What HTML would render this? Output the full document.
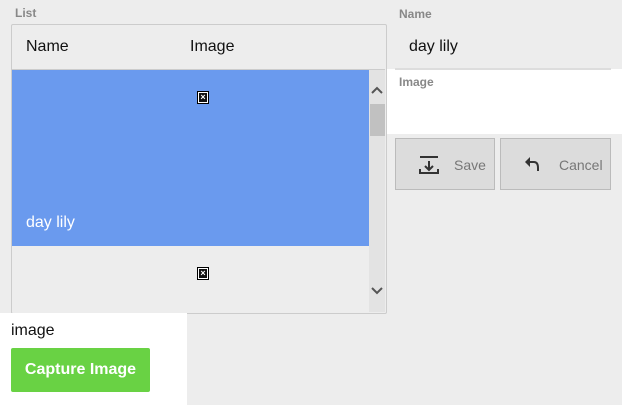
<!DOCTYPE html>
<html><head><style>
body{margin:0;width:622px;height:405px;background:#ededed;font-family:"Liberation Sans",Arial,sans-serif;position:relative;overflow:hidden}
.a{position:absolute}
.lbl{font-size:12px;font-weight:bold;color:#888}
.x{position:absolute;width:10px;height:11px;border:1px solid #000;background:#fff}
.x:after{content:"";position:absolute;left:1px;top:1px;width:8px;height:9px;background:#111}
.x span{position:absolute;left:1px;top:-1px;color:#fff;font-size:9px;font-weight:bold;z-index:1;line-height:12px;width:8px;text-align:center}
.btn{position:absolute;background:#dcdcdc;border:1px solid #bbb;box-sizing:border-box;color:#777;font-size:14px}
</style></head><body>
<div class="a lbl" style="left:15px;top:6px">List</div>
<div class="a" style="left:11px;top:24px;width:374px;height:288px;border:1px solid #ccc;border-radius:2px;background:#ededed"></div>
<div class="a" style="left:26px;top:38px;font-size:16px;color:#111">Name</div>
<div class="a" style="left:190px;top:38px;font-size:16px;color:#111">Image</div>
<div class="a" style="left:12px;top:69px;width:373px;height:1px;background:#ccc"></div>
<div class="a" style="left:12px;top:70px;width:357px;height:176px;background:#6a9aee"></div>
<div class="x" style="left:197px;top:91px"><span>×</span></div>
<div class="a" style="left:26px;top:214px;font-size:16px;color:#fff">day lily</div>
<div class="x" style="left:197px;top:267px"><span>×</span></div>
<div class="a" style="left:369px;top:70px;width:16px;height:242px;background:#e3e3e3"></div>
<div class="a" style="left:370px;top:104px;width:15px;height:32px;background:#c1c1c1"></div>
<svg class="a" style="left:371px;top:86px" width="12" height="8"><path d="M1 7L6 2L11 7" stroke="#555" stroke-width="2" fill="none"/></svg>
<svg class="a" style="left:371px;top:287px" width="12" height="8"><path d="M1 1L6 6L11 1" stroke="#555" stroke-width="2" fill="none"/></svg>
<div class="a" style="left:0;top:313px;width:187px;height:92px;background:#fff"></div>
<div class="a" style="left:11px;top:322px;font-size:16px;color:#111">image</div>
<div class="a" style="left:11px;top:348px;width:139px;height:44px;background:#69d244;border-radius:2px;color:#fff;font-weight:bold;font-size:16px;line-height:44px;text-align:center">Capture Image</div>
<div class="a lbl" style="left:399px;top:7px">Name</div>
<div class="a" style="left:409px;top:38px;font-size:16px;color:#111">day lily</div>
<div class="a" style="left:387px;top:69px;width:235px;height:65px;background:#fff"></div>
<div class="a" style="left:395px;top:68px;width:216px;height:2px;background:#ddd"></div>
<div class="a lbl" style="left:399px;top:75px">Image</div>
<div class="btn" style="left:395px;top:138px;width:100px;height:52px">
<svg class="a" style="left:22px;top:16px" width="22" height="20"><path d="M2 2H20M11 6V15M7 11L11 15L15 11M2 14V18H20V14" stroke="#333" stroke-width="2" fill="none"/></svg>
<span class="a" style="left:58px;top:18px">Save</span></div>
<div class="btn" style="left:500px;top:138px;width:111px;height:52px">
<svg class="a" style="left:23px;top:17px" width="18" height="18"><path d="M3 6H10Q14 6 14 12V15" stroke="#333" stroke-width="2" fill="none"/><path d="M1 6L6 1V11Z" fill="#333"/></svg>
<span class="a" style="left:58px;top:18px">Cancel</span></div>
</body></html>
